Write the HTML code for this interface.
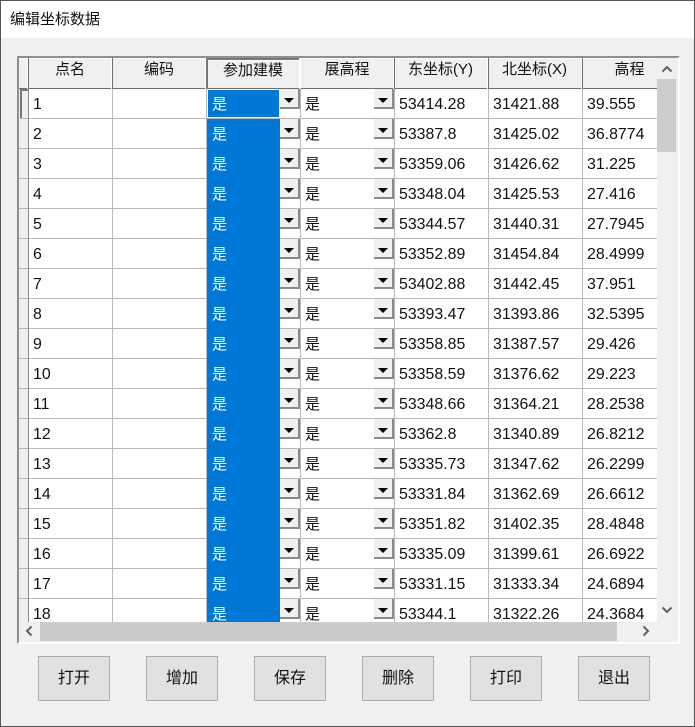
<!DOCTYPE html>
<html><head><meta charset="utf-8"><style>
html,body{margin:0;padding:0}
body{width:695px;height:727px;overflow:hidden;position:relative;background:#f0f0f0;font-family:"Liberation Sans","Noto Sans CJK SC",sans-serif;color:#000}
#win{position:absolute;left:0;top:0;width:693px;height:725px;border:1px solid #555;background:#f0f0f0}
#title{position:absolute;left:1px;top:1px;width:693px;height:37px;background:#fff}
#title span{position:absolute;left:9px;top:9px;font-size:15px;line-height:20px;color:#111}
#frame{position:absolute;left:17px;top:56px;width:659px;height:584px;border-top:2px solid #8f8f8f;border-left:2px solid #8f8f8f;border-right:2px solid #fff;border-bottom:2px solid #fff;background:#f0f0f0}
#clip{position:absolute;left:19px;top:58px;width:638px;height:564px;overflow:hidden;background:#f0f0f0}
.hd{position:absolute;top:0;height:30px;background:#f0f0f0;border-bottom:1px solid #6e6e6e;border-left:1px solid #6e6e6e;box-shadow:inset 0 1px 0 #fff,-1px 0 0 #fff;font-size:15px;line-height:23px;text-indent:-2px;text-align:center;color:#111}
.r{position:absolute;left:0;width:638px;height:30px}
.r .rh{position:absolute;left:0;top:0;width:9px;height:29px;background:#f0f0f0;border-bottom:1px solid #b4b4b4}
.r .v{position:absolute;left:9px;top:0;width:628px;height:29px;background:#fff;border-bottom:1px solid #b9b9b9;border-left:1px solid #8a8a8a}
.r i{position:absolute;top:0;width:1px;height:30px;background:#b9b9b9}
.r b{position:absolute;top:0;font-weight:normal;font-size:15.9px;line-height:32px;white-space:nowrap;color:#111}
.bl{position:absolute;left:188px;top:0;width:73px;height:30px;background:#0078d7}
.r b.y{font-size:15px;color:#fff;left:193px}
.r b.z{font-size:15px;left:286px}
.dd{position:absolute;top:0;width:18px;height:18px;background:#f0f0f0;border-right:2px solid #8a8a8a;border-bottom:2px solid #8a8a8a}
.dd:after{content:"";position:absolute;left:4px;top:9px;border-left:5px solid transparent;border-right:5px solid transparent;border-top:5px solid #000}
#sv{position:absolute;left:657px;top:58px;width:19px;height:564px;background:#f0f0f0}
#svt{position:absolute;left:657px;top:79px;width:19px;height:73px;background:#cdcdcd}
#sh{position:absolute;left:19px;top:622px;width:638px;height:19px;background:#f0f0f0}
#sht{position:absolute;left:40px;top:622px;width:577px;height:19px;background:#cbcbcb}
.btn{position:absolute;top:656px;width:70px;height:43px;border:1px solid #adadad;background:#e1e1e1;font-size:16px;line-height:43px;text-align:center;color:#111}
svg{position:absolute}
</style></head><body>
<div id="win"></div>
<div id="title"><span>编辑坐标数据</span></div>
<div id="frame"></div>
<div id="clip">
<div class="hd" style="left:0;width:9px;border-left:0;box-shadow:inset 0 1px 0 #fff"></div>
<div class="hd" style="left:9px;width:84px">点名</div>
<div class="hd" style="left:93px;width:94px">编码</div>
<div class="hd" style="left:187px;width:94px;box-sizing:content-box;border-left:2px solid #777;border-top:2px solid #777;height:28px;width:92px;line-height:21px">参加建模</div>
<div class="hd" style="left:281px;width:94px;border-left-color:#fff">展高程</div>
<div class="hd" style="left:375px;width:93px">东坐标(Y)</div>
<div class="hd" style="left:469px;width:93px">北坐标(X)</div>
<div class="hd" style="left:563px;width:95px">高程</div>

<div class="r" style="top:31px"><div class="rh" style="left:1px;width:8px;box-shadow:inset 2px 2px 0 #777"></div><div class="v"></div><i style="left:93px"></i><i style="left:187px"></i><i style="left:281px"></i><i style="left:375px"></i><i style="left:469px"></i><i style="left:563px"></i><div class="bl" style="width:71px;height:27px;left:189px;top:1px;box-shadow:0 0 0 1px #fff"></div><b style="left:14px">1</b><b class="y">是</b><div class="dd" style="left:261px"></div><b class="z">是</b><div class="dd" style="left:355px"></div><b style="left:380px">53414.28</b><b style="left:474px">31421.88</b><b style="left:568px">39.555</b></div>
<div class="r" style="top:61px"><div class="rh"></div><div class="v"></div><i style="left:93px"></i><i style="left:187px"></i><i style="left:281px"></i><i style="left:375px"></i><i style="left:469px"></i><i style="left:563px"></i><div class="bl"></div><b style="left:14px">2</b><b class="y">是</b><div class="dd" style="left:261px"></div><b class="z">是</b><div class="dd" style="left:355px"></div><b style="left:380px">53387.8</b><b style="left:474px">31425.02</b><b style="left:568px">36.8774</b></div>
<div class="r" style="top:91px"><div class="rh"></div><div class="v"></div><i style="left:93px"></i><i style="left:187px"></i><i style="left:281px"></i><i style="left:375px"></i><i style="left:469px"></i><i style="left:563px"></i><div class="bl"></div><b style="left:14px">3</b><b class="y">是</b><div class="dd" style="left:261px"></div><b class="z">是</b><div class="dd" style="left:355px"></div><b style="left:380px">53359.06</b><b style="left:474px">31426.62</b><b style="left:568px">31.225</b></div>
<div class="r" style="top:121px"><div class="rh"></div><div class="v"></div><i style="left:93px"></i><i style="left:187px"></i><i style="left:281px"></i><i style="left:375px"></i><i style="left:469px"></i><i style="left:563px"></i><div class="bl"></div><b style="left:14px">4</b><b class="y">是</b><div class="dd" style="left:261px"></div><b class="z">是</b><div class="dd" style="left:355px"></div><b style="left:380px">53348.04</b><b style="left:474px">31425.53</b><b style="left:568px">27.416</b></div>
<div class="r" style="top:151px"><div class="rh"></div><div class="v"></div><i style="left:93px"></i><i style="left:187px"></i><i style="left:281px"></i><i style="left:375px"></i><i style="left:469px"></i><i style="left:563px"></i><div class="bl"></div><b style="left:14px">5</b><b class="y">是</b><div class="dd" style="left:261px"></div><b class="z">是</b><div class="dd" style="left:355px"></div><b style="left:380px">53344.57</b><b style="left:474px">31440.31</b><b style="left:568px">27.7945</b></div>
<div class="r" style="top:181px"><div class="rh"></div><div class="v"></div><i style="left:93px"></i><i style="left:187px"></i><i style="left:281px"></i><i style="left:375px"></i><i style="left:469px"></i><i style="left:563px"></i><div class="bl"></div><b style="left:14px">6</b><b class="y">是</b><div class="dd" style="left:261px"></div><b class="z">是</b><div class="dd" style="left:355px"></div><b style="left:380px">53352.89</b><b style="left:474px">31454.84</b><b style="left:568px">28.4999</b></div>
<div class="r" style="top:211px"><div class="rh"></div><div class="v"></div><i style="left:93px"></i><i style="left:187px"></i><i style="left:281px"></i><i style="left:375px"></i><i style="left:469px"></i><i style="left:563px"></i><div class="bl"></div><b style="left:14px">7</b><b class="y">是</b><div class="dd" style="left:261px"></div><b class="z">是</b><div class="dd" style="left:355px"></div><b style="left:380px">53402.88</b><b style="left:474px">31442.45</b><b style="left:568px">37.951</b></div>
<div class="r" style="top:241px"><div class="rh"></div><div class="v"></div><i style="left:93px"></i><i style="left:187px"></i><i style="left:281px"></i><i style="left:375px"></i><i style="left:469px"></i><i style="left:563px"></i><div class="bl"></div><b style="left:14px">8</b><b class="y">是</b><div class="dd" style="left:261px"></div><b class="z">是</b><div class="dd" style="left:355px"></div><b style="left:380px">53393.47</b><b style="left:474px">31393.86</b><b style="left:568px">32.5395</b></div>
<div class="r" style="top:271px"><div class="rh"></div><div class="v"></div><i style="left:93px"></i><i style="left:187px"></i><i style="left:281px"></i><i style="left:375px"></i><i style="left:469px"></i><i style="left:563px"></i><div class="bl"></div><b style="left:14px">9</b><b class="y">是</b><div class="dd" style="left:261px"></div><b class="z">是</b><div class="dd" style="left:355px"></div><b style="left:380px">53358.85</b><b style="left:474px">31387.57</b><b style="left:568px">29.426</b></div>
<div class="r" style="top:301px"><div class="rh"></div><div class="v"></div><i style="left:93px"></i><i style="left:187px"></i><i style="left:281px"></i><i style="left:375px"></i><i style="left:469px"></i><i style="left:563px"></i><div class="bl"></div><b style="left:14px">10</b><b class="y">是</b><div class="dd" style="left:261px"></div><b class="z">是</b><div class="dd" style="left:355px"></div><b style="left:380px">53358.59</b><b style="left:474px">31376.62</b><b style="left:568px">29.223</b></div>
<div class="r" style="top:331px"><div class="rh"></div><div class="v"></div><i style="left:93px"></i><i style="left:187px"></i><i style="left:281px"></i><i style="left:375px"></i><i style="left:469px"></i><i style="left:563px"></i><div class="bl"></div><b style="left:14px">11</b><b class="y">是</b><div class="dd" style="left:261px"></div><b class="z">是</b><div class="dd" style="left:355px"></div><b style="left:380px">53348.66</b><b style="left:474px">31364.21</b><b style="left:568px">28.2538</b></div>
<div class="r" style="top:361px"><div class="rh"></div><div class="v"></div><i style="left:93px"></i><i style="left:187px"></i><i style="left:281px"></i><i style="left:375px"></i><i style="left:469px"></i><i style="left:563px"></i><div class="bl"></div><b style="left:14px">12</b><b class="y">是</b><div class="dd" style="left:261px"></div><b class="z">是</b><div class="dd" style="left:355px"></div><b style="left:380px">53362.8</b><b style="left:474px">31340.89</b><b style="left:568px">26.8212</b></div>
<div class="r" style="top:391px"><div class="rh"></div><div class="v"></div><i style="left:93px"></i><i style="left:187px"></i><i style="left:281px"></i><i style="left:375px"></i><i style="left:469px"></i><i style="left:563px"></i><div class="bl"></div><b style="left:14px">13</b><b class="y">是</b><div class="dd" style="left:261px"></div><b class="z">是</b><div class="dd" style="left:355px"></div><b style="left:380px">53335.73</b><b style="left:474px">31347.62</b><b style="left:568px">26.2299</b></div>
<div class="r" style="top:421px"><div class="rh"></div><div class="v"></div><i style="left:93px"></i><i style="left:187px"></i><i style="left:281px"></i><i style="left:375px"></i><i style="left:469px"></i><i style="left:563px"></i><div class="bl"></div><b style="left:14px">14</b><b class="y">是</b><div class="dd" style="left:261px"></div><b class="z">是</b><div class="dd" style="left:355px"></div><b style="left:380px">53331.84</b><b style="left:474px">31362.69</b><b style="left:568px">26.6612</b></div>
<div class="r" style="top:451px"><div class="rh"></div><div class="v"></div><i style="left:93px"></i><i style="left:187px"></i><i style="left:281px"></i><i style="left:375px"></i><i style="left:469px"></i><i style="left:563px"></i><div class="bl"></div><b style="left:14px">15</b><b class="y">是</b><div class="dd" style="left:261px"></div><b class="z">是</b><div class="dd" style="left:355px"></div><b style="left:380px">53351.82</b><b style="left:474px">31402.35</b><b style="left:568px">28.4848</b></div>
<div class="r" style="top:481px"><div class="rh"></div><div class="v"></div><i style="left:93px"></i><i style="left:187px"></i><i style="left:281px"></i><i style="left:375px"></i><i style="left:469px"></i><i style="left:563px"></i><div class="bl"></div><b style="left:14px">16</b><b class="y">是</b><div class="dd" style="left:261px"></div><b class="z">是</b><div class="dd" style="left:355px"></div><b style="left:380px">53335.09</b><b style="left:474px">31399.61</b><b style="left:568px">26.6922</b></div>
<div class="r" style="top:511px"><div class="rh"></div><div class="v"></div><i style="left:93px"></i><i style="left:187px"></i><i style="left:281px"></i><i style="left:375px"></i><i style="left:469px"></i><i style="left:563px"></i><div class="bl"></div><b style="left:14px">17</b><b class="y">是</b><div class="dd" style="left:261px"></div><b class="z">是</b><div class="dd" style="left:355px"></div><b style="left:380px">53331.15</b><b style="left:474px">31333.34</b><b style="left:568px">24.6894</b></div>
<div class="r" style="top:541px"><div class="rh"></div><div class="v"></div><i style="left:93px"></i><i style="left:187px"></i><i style="left:281px"></i><i style="left:375px"></i><i style="left:469px"></i><i style="left:563px"></i><div class="bl"></div><b style="left:14px">18</b><b class="y">是</b><div class="dd" style="left:261px"></div><b class="z">是</b><div class="dd" style="left:355px"></div><b style="left:380px">53344.1</b><b style="left:474px">31322.26</b><b style="left:568px">24.3684</b></div>
</div>
<div id="sv"></div><div id="svt"></div>
<div id="sh"></div><div id="sht"></div>
<svg style="left:660px;top:64px" width="14" height="10"><path d="M2.5 7.5L7 3L11.5 7.5" fill="none" stroke="#606060" stroke-width="2"/></svg>
<svg style="left:660px;top:605px" width="14" height="10"><path d="M2.5 2.5L7 7L11.5 2.5" fill="none" stroke="#606060" stroke-width="2"/></svg>
<svg style="left:24px;top:624px" width="10" height="14"><path d="M7.5 2.5L3 7L7.5 11.5" fill="none" stroke="#606060" stroke-width="2"/></svg>
<svg style="left:641px;top:624px" width="10" height="14"><path d="M2.5 2.5L7 7L2.5 11.5" fill="none" stroke="#606060" stroke-width="2"/></svg>
<div class="btn" style="left:38px">打开</div>
<div class="btn" style="left:146px">增加</div>
<div class="btn" style="left:254px">保存</div>
<div class="btn" style="left:362px">删除</div>
<div class="btn" style="left:470px">打印</div>
<div class="btn" style="left:578px">退出</div>
</body></html>
